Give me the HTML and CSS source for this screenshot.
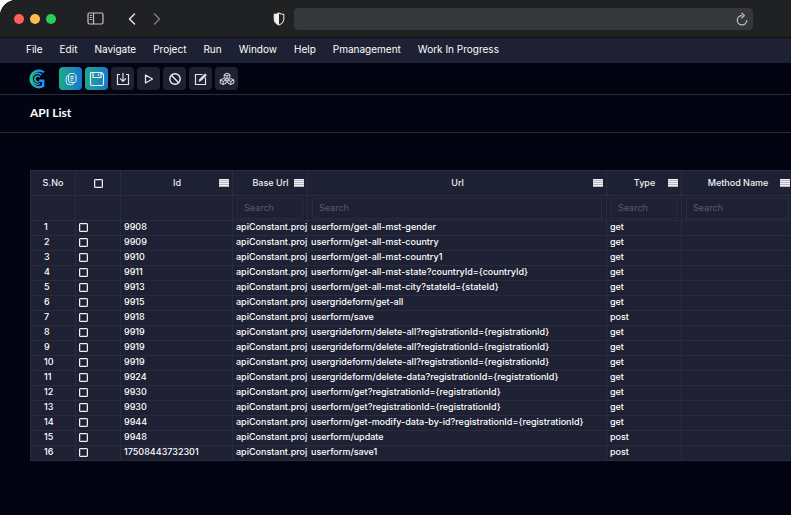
FILE: index.html
```html
<!DOCTYPE html>
<html lang="en">
<head>
<meta charset="utf-8">
<title>API List</title>
<link rel="stylesheet" href="styles.css">
</head>
<body>
<div class="window">
  <header class="chrome">
    <div class="lights"><span class="light red"></span><span class="light yellow"></span><span class="light green"></span></div>
    <button class="plain sidebar" aria-label="Sidebar"><svg width="17" height="13" viewBox="0 0 17 13" fill="none" stroke="#c4c5c7" stroke-width="1.2"><rect x="1" y="1" width="15" height="11" rx="1.5"/><path d="M6.5 1v11M2.8 3.5h2M2.8 5.5h2M2.8 7.5h2"/></svg></button>
    <button class="plain back" aria-label="Back"><svg width="8" height="14" viewBox="0 0 8 14" fill="none" stroke="#e4e4e6" stroke-width="1.5" stroke-linecap="round" stroke-linejoin="round"><path d="M6.500 2 1.500 7l5 5"/></svg></button>
    <button class="plain forward" aria-label="Forward"><svg width="8" height="14" viewBox="0 0 8 14" fill="none" stroke="#7b7c7f" stroke-width="1.5" stroke-linecap="round" stroke-linejoin="round"><path d="m1.500 2 5 5-5 5"/></svg></button>
    <button class="plain shield" aria-label="Privacy"><svg width="12" height="14" viewBox="0 0 12 14"><path d="M6 1c1.500.9 3 1.300 4.800 1.400V7c0 3-2 4.800-4.800 6C3.200 11.800 1.200 10 1.200 7V2.400C3 2.300 4.500 1.900 6 1Z" fill="none" stroke="#d8d8da" stroke-width="1.100"/><path d="M6 1v12C3.200 11.800 1.200 10 1.200 7V2.400C3 2.300 4.500 1.900 6 1Z" fill="#f1f1f2"/></svg></button>
    <div class="address">
      <input type="text" aria-label="Address">
      <button class="plain reload" aria-label="Reload"><svg width="12" height="14" viewBox="0 0 12 14" fill="none" stroke="#bdbec1" stroke-width="1.300"><path d="M6 3.500a4.700 4.700 0 1 0 4.700 4.700"/><path d="m5.500 1 2.800 2.600-2.800 2.600" stroke-linejoin="round"/></svg></button>
    </div>
  </header>
  <nav class="menu">
    <a href="#">File</a><a href="#">Edit</a><a href="#">Navigate</a><a href="#">Project</a><a href="#">Run</a><a href="#">Window</a><a href="#">Help</a><a href="#">Pmanagement</a><a href="#">Work In Progress</a>
  </nav>
  <div class="toolbar">
    <svg class="logo" width="18" height="20" viewBox="0 0 18 20" fill="none"><defs><linearGradient id="brand" x1="0" x2="1"><stop offset="0" stop-color="#22c1a0"/><stop offset="1" stop-color="#1c8cff"/></linearGradient></defs><g stroke="url(#brand)"><path d="M16.800 3.200A8.300 8.300 0 1 0 16.200 17V11.800h-4" stroke-width="2.400"/><path d="M14.500 6A5.400 5.400 0 1 0 13 14.600" stroke-width="1.500"/><path d="M13 8.200A2.900 2.900 0 1 0 11.500 12.800" stroke-width="1.500"/></g></svg>
    <button class="tool active" aria-label="Documents"><svg width="12" height="14" viewBox="0 0 12 14" fill="none" stroke="#e2f4f5" stroke-linejoin="round"><path d="M5.500 1.500H9L11 3.500V8.500Q11 10.500 9 10.500H5.500Q3.500 10.500 3.500 8.500V3.500Q3.500 1.500 5.500 1.500Z"/><path d="M3.500 3.500Q1.200 3.800 1.200 6v3.500Q1.200 12.700 4.500 12.700H6.500Q8.300 12.700 8.800 10.700M5.300 4.500h3.500M5.300 6.300h3.500M5.300 8.200h2.500"/></svg></button>
    <button class="tool active" aria-label="Save"><svg width="16" height="16" viewBox="0 0 16 16" fill="none" stroke="#e2f4f5" stroke-width="1.200" stroke-linejoin="round"><path d="M2.500 1.500h10l2 2v9.500Q14.500 14.500 13 14.500H3Q1.500 14.500 1.500 13V2.500Q1.500 1.500 2.500 1.500Z"/><path d="M4 1.500v5h8v-5M9.500 2.800v2"/></svg></button>
    <button class="tool" aria-label="Import"><svg width="14" height="14" viewBox="0 0 14 14" fill="none" stroke="#e3e3e8" stroke-width="1.200"><path d="M4 2.500H1.500v10h11v-10H10M7 1v8M4 6.300l3 3 3-3"/></svg></button>
    <button class="tool" aria-label="Run"><svg width="12" height="12" viewBox="0 0 12 12" fill="none" stroke="#e3e3e8" stroke-width="1.300" stroke-linejoin="round"><path d="M2.500 2v8L9.500 6Z"/></svg></button>
    <button class="tool" aria-label="Stop"><svg width="14" height="14" viewBox="0 0 14 14" fill="none" stroke="#f0f0f3" stroke-width="1.400"><circle cx="7" cy="7" r="5.200"/><path d="m3.300 3.300 7.400 7.400"/></svg></button>
    <button class="tool" aria-label="Edit"><svg width="14" height="14" viewBox="0 0 14 14" fill="none" stroke="#e3e3e8" stroke-width="1.200"><path d="M8.500 2.500h-7v10h10v-7"/><path d="m5 9.500.5-2.200L11 1.700l1.500 1.500L7 8.800Z" fill="#e3e3e8" stroke-width=".6"/></svg></button>
    <button class="tool" aria-label="Modules"><svg width="16" height="14" viewBox="0 0 16 14" fill="none" stroke="#e3e3e8" stroke-linejoin="round"><path d="m8 1.200 2.800 1.300v3L8 6.900 5.200 5.500v-3ZM5.200 2.600 8 4l2.800-1.400M8 4v2.900"/><path d="m4.200 6.600 3 1.300v3.200l-3 1.400-3-1.400V7.900ZM1.200 8l3 1.400 3-1.400M4.200 9.400v3.100M11.800 6.600l3 1.300v3.200l-3 1.400-3-1.400V7.900ZM8.800 8l3 1.400 3-1.400M11.800 9.400v3.100"/></svg></button>
  </div>
  <h1 class="title">API List</h1>
  <main class="content">
    <table class="grid">
      <colgroup><col class="narrow"><col class="narrow"><col class="wide"><col class="medium"><col class="url"><col class="medium"><col class="wide"></colgroup>
      <thead>
        <tr class="heads">
          <th>S.No</th>
          <th><input type="checkbox" aria-label="Select all"></th>
          <th><div class="head"><span>Id</span><button class="lines" aria-label="Id menu"></button></div></th>
          <th><div class="head"><span>Base Url</span><button class="lines" aria-label="Base Url menu"></button></div></th>
          <th><div class="head"><span>Url</span><button class="lines" aria-label="Url menu"></button></div></th>
          <th><div class="head"><span>Type</span><button class="lines" aria-label="Type menu"></button></div></th>
          <th><div class="head"><span>Method Name</span><button class="lines" aria-label="Method Name menu"></button></div></th>
        </tr>
        <tr class="filters">
          <td></td><td></td><td></td>
          <td><input type="text" placeholder="Search" aria-label="Search Base Url"></td>
          <td><input type="text" placeholder="Search" aria-label="Search Url"></td>
          <td><input type="text" placeholder="Search" aria-label="Search Type"></td>
          <td><input type="text" placeholder="Search" aria-label="Search Method Name"></td>
        </tr>
      </thead>
      <tbody>
        <tr><td>1</td><td><input type="checkbox" aria-label="Select row 1"></td><td>9908</td><td>apiConstant.proj</td><td>userform/get-all-mst-gender</td><td>get</td><td></td></tr>
        <tr><td>2</td><td><input type="checkbox" aria-label="Select row 2"></td><td>9909</td><td>apiConstant.proj</td><td>userform/get-all-mst-country</td><td>get</td><td></td></tr>
        <tr><td>3</td><td><input type="checkbox" aria-label="Select row 3"></td><td>9910</td><td>apiConstant.proj</td><td>userform/get-all-mst-country1</td><td>get</td><td></td></tr>
        <tr><td>4</td><td><input type="checkbox" aria-label="Select row 4"></td><td>9911</td><td>apiConstant.proj</td><td>userform/get-all-mst-state?countryId={countryId}</td><td>get</td><td></td></tr>
        <tr><td>5</td><td><input type="checkbox" aria-label="Select row 5"></td><td>9913</td><td>apiConstant.proj</td><td>userform/get-all-mst-city?stateId={stateId}</td><td>get</td><td></td></tr>
        <tr><td>6</td><td><input type="checkbox" aria-label="Select row 6"></td><td>9915</td><td>apiConstant.proj</td><td>usergrideform/get-all</td><td>get</td><td></td></tr>
        <tr><td>7</td><td><input type="checkbox" aria-label="Select row 7"></td><td>9918</td><td>apiConstant.proj</td><td>userform/save</td><td>post</td><td></td></tr>
        <tr><td>8</td><td><input type="checkbox" aria-label="Select row 8"></td><td>9919</td><td>apiConstant.proj</td><td>usergrideform/delete-all?registrationId={registrationId}</td><td>get</td><td></td></tr>
        <tr><td>9</td><td><input type="checkbox" aria-label="Select row 9"></td><td>9919</td><td>apiConstant.proj</td><td>usergrideform/delete-all?registrationId={registrationId}</td><td>get</td><td></td></tr>
        <tr><td>10</td><td><input type="checkbox" aria-label="Select row 10"></td><td>9919</td><td>apiConstant.proj</td><td>usergrideform/delete-all?registrationId={registrationId}</td><td>get</td><td></td></tr>
        <tr><td>11</td><td><input type="checkbox" aria-label="Select row 11"></td><td>9924</td><td>apiConstant.proj</td><td>usergrideform/delete-data?registrationId={registrationId}</td><td>get</td><td></td></tr>
        <tr><td>12</td><td><input type="checkbox" aria-label="Select row 12"></td><td>9930</td><td>apiConstant.proj</td><td>userform/get?registrationId={registrationId}</td><td>get</td><td></td></tr>
        <tr><td>13</td><td><input type="checkbox" aria-label="Select row 13"></td><td>9930</td><td>apiConstant.proj</td><td>userform/get?registrationId={registrationId}</td><td>get</td><td></td></tr>
        <tr><td>14</td><td><input type="checkbox" aria-label="Select row 14"></td><td>9944</td><td>apiConstant.proj</td><td>userform/get-modify-data-by-id?registrationId={registrationId}</td><td>get</td><td></td></tr>
        <tr><td>15</td><td><input type="checkbox" aria-label="Select row 15"></td><td>9948</td><td>apiConstant.proj</td><td>userform/update</td><td>post</td><td></td></tr>
        <tr><td>16</td><td><input type="checkbox" aria-label="Select row 16"></td><td>17508443732301</td><td>apiConstant.proj</td><td>userform/save1</td><td>post</td><td></td></tr>
      </tbody>
    </table>
  </main>
</div>
</body>
</html>
```
FILE: styles.css
```css
* { box-sizing: border-box; }
body {
  margin: 0;
  background: #fff;
  color: #f0f0f3;
  font: 500 9px/12px Inter, "Liberation Sans", sans-serif;
}
button, input { font: inherit; color: inherit; }
svg { display: block; }
.window {
  min-height: 100vh;
  background: #020412;
  border-radius: 16px 0 0 0;
  overflow: hidden;
}

.chrome {
  display: flex;
  align-items: center;
  height: 38px;
  padding: 0 38px 0 14px;
  background: #202123;
  border-bottom: 1px solid #101114;
}
.lights { display: flex; gap: 6px; }
.light { width: 10px; height: 10px; border-radius: 50%; }
.red { background: #ff5f5b; }
.yellow { background: #fdbc4e; }
.green { background: #28cf57; }
.plain { padding: 0; border: 0; background: none; }
.sidebar { margin-left: 31px; }
.back { margin-left: 24px; }
.forward { margin-left: 17px; }
.shield { margin-left: 112px; }
.address {
  display: flex;
  align-items: center;
  flex: 1;
  height: 22px;
  margin-left: 9px;
  padding-right: 5px;
  border-radius: 4px;
  background: #36373a;
}
.address input { flex: 1; min-width: 0; border: 0; background: none; outline: 0; }

.menu {
  display: flex;
  align-items: center;
  gap: 17px;
  height: 25px;
  padding: 0 26px 3px;
  background: #1e2033;
  font-size: 10px;
  font-weight: 400;
  color: #fff;
}
.menu a { color: inherit; text-decoration: none; white-space: nowrap; }

.toolbar {
  display: flex;
  align-items: center;
  gap: 3px;
  height: 32px;
  padding: 0 27px;
  border-bottom: 1px solid #2b2c38;
}
.logo { margin-right: 11px; }
.tool {
  display: flex;
  align-items: center;
  justify-content: center;
  width: 23px;
  height: 23px;
  padding: 0;
  border: 0;
  border-radius: 4px;
  background: #1e2033;
}
.tool.active { background: linear-gradient(90deg, #1fa98b, #1976cf); }

.title {
  height: 38px;
  margin: 0;
  padding: 0 30px;
  border-bottom: 1px solid #2b2c38;
  font: 700 12px/36px Lato, sans-serif;
  color: #fff;
}

.content { padding: 37px 0 0 30px; overflow: hidden; }
.grid {
  width: 100%;
  min-width: 764px;
  table-layout: fixed;
  border-collapse: collapse;
  background: #1e2033;
}
.narrow { width: 45px; }
.medium { width: 75px; }
.wide { width: 112px; }
.grid th, .grid td {
  padding: 0 0 0 3px;
  border: 1px solid #2a2b3c;
  font-weight: 500;
  text-align: left;
  white-space: nowrap;
  overflow: hidden;
}
.grid .heads th { height: 25px; padding: 0; text-align: center; }
.head { display: flex; align-items: center; padding: 0 3px 0 14px; }
.head span { flex: 1; }
.lines {
  width: 10px;
  height: 8px;
  padding: 0;
  border: 0;
  background: repeating-linear-gradient(#f0f0f3 0 1px, #b4b5bf 1px 2px);
}
.grid .filters td { height: 25px; padding: 0 4px; }
.filters input {
  display: block;
  width: 100%;
  height: 21px;
  padding: 0 6px 2px;
  border: 1px solid #2a2b3c;
  background: none;
  font-weight: 400;
  outline: 0;
}
.filters input::placeholder { color: #5c5d68; opacity: 1; }
.grid tbody td { height: 15px; padding-bottom: 2px; color: #fff; }
.grid tbody td:first-child { padding-left: 13px; }
input[type="checkbox"] {
  appearance: none;
  display: block;
  width: 9px;
  height: 9px;
  margin: 0;
  border: 1px solid #f0f0f3;
  border-radius: 1px;
  box-shadow: inset 0 0 0 1px #5a5b6a;
}
.heads input[type="checkbox"] { margin: 0 auto; }
```
